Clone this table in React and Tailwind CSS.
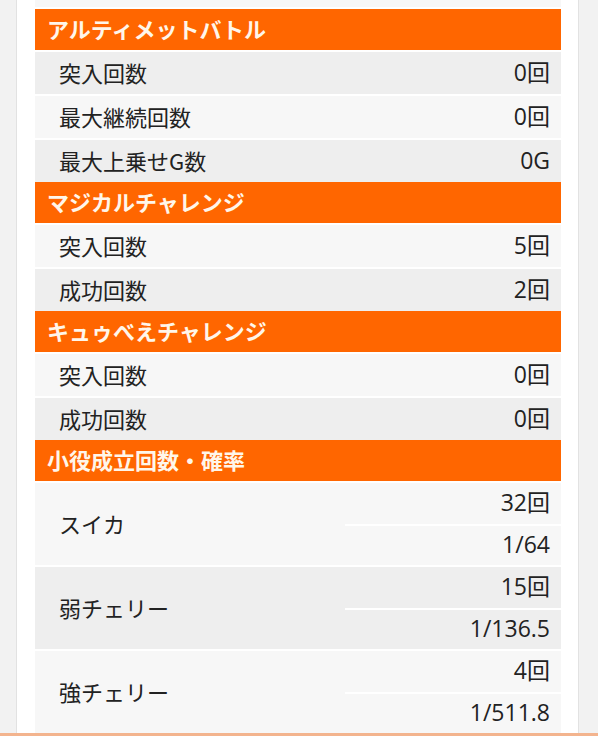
const font = { fontFamily: '"Noto Sans CJK JP", "Noto Sans", sans-serif' };

const sections = [
  {
    title: "アルティメットバトル",
    rows: [
      ["突入回数", "0回", "bg-[#eeeeee]"],
      ["最大継続回数", "0回", "bg-[#f7f7f7]"],
      ["最大上乗せG数", "0G", "bg-[#eeeeee]"],
    ],
  },
  {
    title: "マジカルチャレンジ",
    rows: [
      ["突入回数", "5回", "bg-[#f7f7f7]"],
      ["成功回数", "2回", "bg-[#eeeeee]"],
    ],
  },
  {
    title: "キュゥべえチャレンジ",
    rows: [
      ["突入回数", "0回", "bg-[#f7f7f7]"],
      ["成功回数", "0回", "bg-[#eeeeee]"],
    ],
  },
];

const koyaku = [
  ["スイカ", "32回", "1/64", "bg-[#f7f7f7]"],
  ["弱チェリー", "15回", "1/136.5", "bg-[#eeeeee]"],
  ["強チェリー", "4回", "1/511.8", "bg-[#f7f7f7]"],
];

// numbers render wider and thinner than the labels' digits
function Num({ children }) {
  return (
    <span className="font-['Open_Sans','Noto_Sans_CJK_JP',sans-serif] text-[23px] text-[#222222]">
      {children}
    </span>
  );
}

function Header({ title }) {
  return (
    <div className="h-[41px] bg-[#ff6600] flex items-center pl-[12px] pb-[3px] text-[22px] font-bold text-[#fff6ea] leading-none">
      {title}
    </div>
  );
}

function Row({ label, value, bg }) {
  return (
    <div className="border-t-2 border-white">
      <div className={`h-[42px] ${bg} flex items-center justify-between pl-[24px] pr-[11px] pb-[2px] text-[22px] text-[#222222] leading-none`}>
        <span>{label}</span>
        <Num>{value}</Num>
      </div>
    </div>
  );
}

function SplitRow({ label, count, rate, bg }) {
  return (
    <div className="border-t-2 border-white">
      <div className={`${bg} flex text-[22px] text-[#222222] leading-none`}>
        <div className="w-[310px] flex items-center pl-[24px] pb-[2px]">{label}</div>
        <div className="flex-1 flex flex-col">
          <div className="h-[41px] flex items-center justify-end pr-[11px] pb-[2px]">
            <Num>{count}</Num>
          </div>
          <div className="h-[41px] flex items-center justify-end pr-[11px] pb-[2px] border-t-2 border-white">
            <Num>{rate}</Num>
          </div>
        </div>
      </div>
    </div>
  );
}

export default function App() {
  return (
    <div className="bg-[#f2f2f2] pl-[16px] pr-[19px] min-h-screen" style={font}>
      <div className="bg-white border-x border-[#e2e2e2] pl-[18px] pr-[17px] pb-[40px]">
        <div className="h-[7px] bg-[#f7f7f7]" />
        <div className="h-[2px]" />
        {sections.map((s) => (
          <div key={s.title}>
            <Header title={s.title} />
            {s.rows.map(([label, value, bg]) => (
              <Row key={label + value + bg} label={label} value={value} bg={bg} />
            ))}
          </div>
        ))}
        <Header title="小役成立回数・確率" />
        {koyaku.map(([label, count, rate, bg]) => (
          <SplitRow key={label} label={label} count={count} rate={rate} bg={bg} />
        ))}
      </div>
      <div className="fixed bottom-0 left-0 right-0 h-[3px] bg-[#f3b48e]" />
    </div>
  );
}
